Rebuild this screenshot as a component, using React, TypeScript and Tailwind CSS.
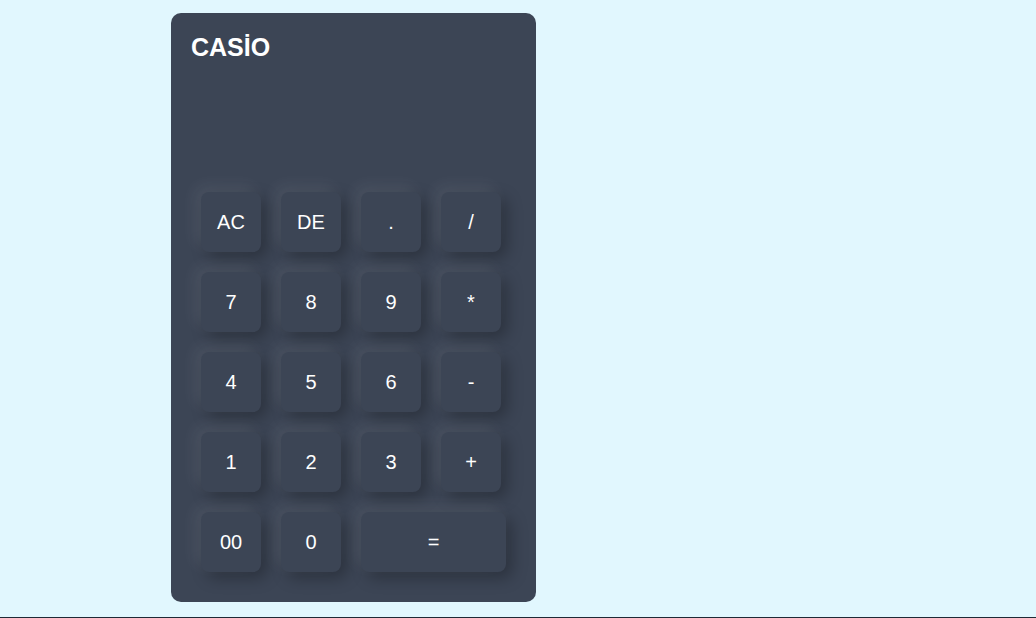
import React from "react";

const rows: string[][] = [
  ["AC", "DE", ".", "/"],
  ["7", "8", "9", "*"],
  ["4", "5", "6", "-"],
  ["1", "2", "3", "+"],
];

function Key({ label, wide }: { label: string; wide?: boolean }) {
  return (
    <button
      className={
        (wide ? "w-[145px] " : "w-[60px] ") +
        "h-[60px] rounded-lg bg-[#3c4555] text-white text-[20px] flex items-center justify-center shadow-[-6px_-6px_16px_rgba(255,255,255,0.08),6px_6px_16px_rgba(0,0,0,0.28)]"
      }
    >
      {label}
    </button>
  );
}

export default function App() {
  return (
    <div
      className="w-full bg-[#e1f7fe] flex flex-col"
      style={{ fontFamily: '"Liberation Sans", Arial, sans-serif' }}
    >
      <div className="h-[617px] pl-[171px] pt-[13px]">
        <div className="w-[365px] h-[589px] rounded-[10px] bg-[#3c4555] pl-[20px] pt-[19px] flex flex-col">
          <div className="text-white font-bold text-[25px] leading-[30px]">CASİO</div>
          <div className="mt-[130px] pl-[10px] flex flex-col gap-[20px]">
            {rows.map((r, i) => (
              <div key={i} className="flex gap-[20px]">
                {r.map((k) => (
                  <Key key={k} label={k} />
                ))}
              </div>
            ))}
            <div className="flex gap-[20px]">
              <Key label="00" />
              <Key label="0" />
              <Key label="=" wide />
            </div>
          </div>
        </div>
      </div>
      <div className="h-[20px] bg-[#1e2a36]" />
    </div>
  );
}
